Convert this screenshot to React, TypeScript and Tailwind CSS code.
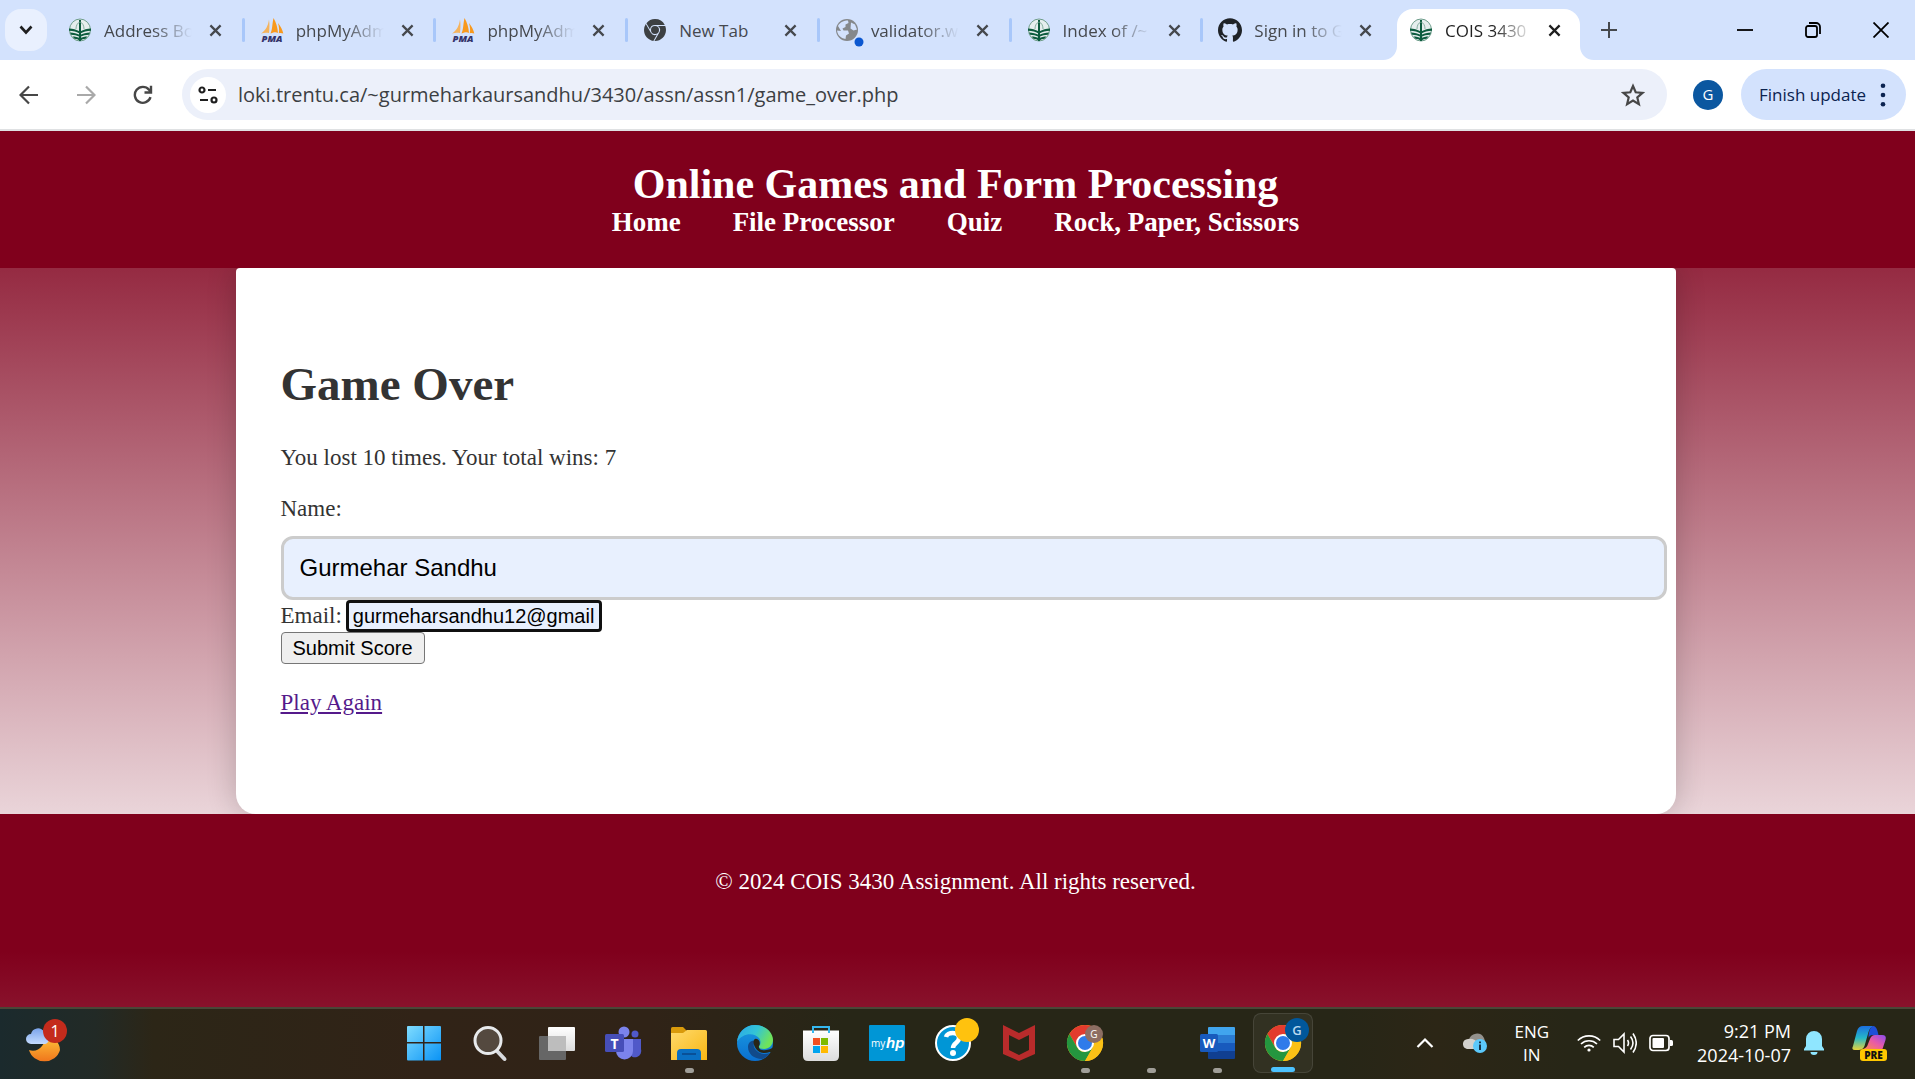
import React, { useId } from "react";
import { SiGithub, SiGooglechrome } from "react-icons/si";

const ui = "font-['Open_Sans','Noto_Sans',sans-serif]";

function TrentIcon() {
  return (
    <svg viewBox="0 0 24 24" className="size-6" fill="none">
      <ellipse cx="12" cy="12" rx="10.5" ry="11" stroke="#6f9e8c" strokeWidth="1" fill="#e6eeee" />
      <path d="M12 2v21" stroke="#0d5c3f" strokeWidth="2" />
      <path d="M12 4c-3 1-4 4-4 7M12 4c3 1 4 4 4 7" stroke="#6f9e8c" strokeWidth="0.8" />
      <path d="M1 10.5c4 0 7 1 11 3 4-2 7-3 11-3v2.2c-4 0-8 1.2-11 3-3-1.800-7-3-11-3z" fill="#0d5c3f" />
      <path d="M2 14.500c3.500 0 7 1 10 2.600 3-1.600 6.500-2.600 10-2.600l-1 2.200c-3 0-6 .8-9 2.300-3-1.500-6-2.300-9-2.300z" fill="#0d5c3f" />
      <path d="M4.500 18.500c2.500 0 5.500.6 7.500 1.700 2-1.100 5-1.700 7.500-1.700l-2 2.200c-2 .1-3.700.8-5.500 2.100-1.800-1.300-3.500-2-5.500-2.100z" fill="#0d5c3f" />
    </svg>
  );
}

function PmaIcon() {
  return (
    <svg viewBox="0 0 24 24" className="size-6">
      <path d="M9 1.500C8 8 6 12 1 15.500c3-1 5.500-1 8-.5C9.500 10 9.700 6 9 1.500z" fill="#f5b35c" />
      <path d="M13.500 0C12 7 12.500 11 10.500 15.500c4-1.500 5.500-1.500 7.500-.5C17.500 9 16 4 13.500 0z" fill="#f8991d" />
      <path d="M18 5c1 4 1.500 7 .8 10.300 1.700-.5 3-.3 4.500.2C22.500 12 20.500 8 18 5z" fill="#f8991d" />
      <text x="12" y="23.500" textAnchor="middle" fontFamily="Open Sans" fontWeight="800" fontStyle="italic" fontSize="9.500" fill="#33336a">PMA</text>
    </svg>
  );
}

function GlobeIcon() {
  return (
    <svg viewBox="0 0 24 24" className="size-6 overflow-visible">
      <circle cx="12" cy="12" r="11" fill="#85888b" />
      <path d="M3 8c2-4 6-5.500 10-5.500l.5 2.500-3 1.500v2.500l-3 1.500 1 2h4.500l1 3-3 2-.5 3.500c-5-1-8-4-8.500-8.500l4 .5zM16 4.500l4 2 2 5-3.500 1-3-2z" fill="#d3e2fd" />
      <circle cx="24" cy="24" r="4.500" fill="#0b57d0" />
    </svg>
  );
}

function Close({ dark }: { dark?: boolean }) {
  return (
    <svg viewBox="0 0 14 14" className="size-[13px]" stroke={dark ? "#1f1f1f" : "#45484d"} strokeWidth="2.4">
      <path d="M1.500 1.500l11 11M12.500 1.500l-11 11" />
    </svg>
  );
}

const tabs = [
  { icon: <TrentIcon />, title: "Address Bo" },
  { icon: <PmaIcon />, title: "phpMyAdm" },
  { icon: <PmaIcon />, title: "phpMyAdm" },
  { icon: <SiGooglechrome className="size-[22px] text-[#3c4043]" />, title: "New Tab" },
  { icon: <GlobeIcon />, title: "validator.w" },
  { icon: <TrentIcon />, title: "Index of /~" },
  { icon: <SiGithub className="size-6 text-[#1f2328]" />, title: "Sign in to G" },
];

const fade =
  "[mask-image:linear-gradient(to_right,black_55%,transparent_100%)]";

function TabStrip() {
  return (
    <div className="flex h-[60px] items-stretch bg-[#d3e2fd]">
      <div className="flex w-[55px] items-center pl-[5px]">
        <button aria-label="Search tabs" className="flex size-[42px] items-center justify-center rounded-2xl bg-[#e9f0fe]">
          <svg viewBox="0 0 14 10" className="h-[10px] w-[14px]" fill="none" stroke="#1f1f1f" strokeWidth="2.6">
            <path d="M1.500 1.500L7 7.500l5.500-6" />
          </svg>
        </button>
      </div>
      {tabs.map((t, i) => (
        <div key={i} className="flex min-w-0 flex-1 items-center pl-[13px]">
          <div className="mr-3 flex w-6 shrink-0 items-center justify-center">{t.icon}</div>
          <div className={"w-[88px] shrink-0 overflow-hidden pt-[2px] text-[17px] leading-6 whitespace-nowrap text-[#45484d] " + (t.title === "New Tab" ? "" : fade)}>{t.title}</div>
          <button aria-label="Close tab" className="ml-[17px] flex shrink-0 items-center">
            <Close />
          </button>
          <div className={"mr-[2px] ml-auto h-6 w-[3px] rounded-sm " + (i < 6 ? "bg-[#a8c7fa]" : "")} />
        </div>
      ))}
      <div className="relative mt-[9px] flex w-[183px] items-center rounded-t-2xl bg-white pb-[9px] pl-3">
        <svg viewBox="0 0 14 14" className="absolute bottom-0 -left-[14px] size-[14px]"><path d="M14 0v14H0C8 14 14 8 14 0z" fill="#fff" /></svg>
        <svg viewBox="0 0 14 14" className="absolute -right-[14px] bottom-0 size-[14px]"><path d="M0 0v14h14C6 14 0 8 0 0z" fill="#fff" /></svg>
        <div className="mr-3 flex w-6 shrink-0 items-center justify-center"><TrentIcon /></div>
        <div className={"w-[88px] shrink-0 overflow-hidden pt-[2px] text-[17px] leading-6 whitespace-nowrap text-[#1f1f1f] " + fade}>COIS 3430</div>
        <button aria-label="Close tab" className="ml-[15px] flex items-center"><Close dark /></button>
      </div>
      <div className="flex w-[335px] items-center justify-between pr-[26px] pl-[21px]">
        <button aria-label="New tab">
          <svg viewBox="0 0 16 16" className="size-4" stroke="#45484d" strokeWidth="2"><path d="M8 0v16M0 8h16" /></svg>
        </button>
        <div className="flex items-center gap-[52px]">
          <button aria-label="Minimize"><svg viewBox="0 0 16 16" className="size-4" stroke="#000" strokeWidth="1.8"><path d="M0 8h16" /></svg></button>
          <button aria-label="Restore">
            <svg viewBox="0 0 16 16" className="size-4" fill="none" stroke="#000" strokeWidth="1.8">
              <rect x="1" y="4" width="11" height="11" rx="2" />
              <path d="M4 1h7a4 4 0 014 4v7" />
            </svg>
          </button>
          <button aria-label="Close window"><svg viewBox="0 0 16 16" className="size-4" stroke="#000" strokeWidth="1.8"><path d="M.5.5l15 15M15.500.5l-15 15" /></svg></button>
        </div>
      </div>
    </div>
  );
}

function Toolbar() {
  return (
    <div className="flex h-[71px] items-center border-b-2 border-[#dfe1e3] bg-white pr-[9px] pl-[19px]">
      <div className="flex w-[163px] shrink-0 items-center gap-[37px]">
        <button aria-label="Back">
          <svg viewBox="0 0 20 20" className="size-5" fill="none" stroke="#474747" strokeWidth="2.2"><path d="M19 10H2M10 1.500L1.500 10l8.500 8.500" /></svg>
        </button>
        <button aria-label="Forward">
          <svg viewBox="0 0 20 20" className="size-5" fill="none" stroke="#a9a9a9" strokeWidth="2.2"><path d="M1 10h17M10 1.500l8.500 8.500-8.500 8.500" /></svg>
        </button>
        <button aria-label="Reload">
          <svg viewBox="0 0 20 20" className="size-5" fill="none" stroke="#474747" strokeWidth="2.4"><path d="M17.500 12.200A8 8 0 1116 4.700L18 7M18 .8V7.500h-6.500" /></svg>
        </button>
      </div>
      <div className="flex h-[51px] flex-1 items-center rounded-full bg-[#ecf0fa] pr-[22px] pl-2">
        <button aria-label="View site information" className="flex size-9 shrink-0 items-center justify-center rounded-full bg-white">
          <svg viewBox="0 0 20 18" className="h-[18px] w-5" fill="none" stroke="#1f1f1f" strokeWidth="2.2">
            <circle cx="4" cy="4" r="2.500" /><path d="M10 4h8M2 14h8" /><circle cx="16" cy="14" r="2.500" />
          </svg>
        </button>
        <input aria-label="Address" defaultValue="loki.trentu.ca/~gurmeharkaursandhu/3430/assn/assn1/game_over.php" className="ml-3 h-10 min-w-0 flex-1 bg-transparent text-[20px] text-[#3c3f43] outline-none" />
        <button aria-label="Bookmark this tab">
          <svg viewBox="0 0 24 24" className="size-6" fill="none" stroke="#474747" strokeWidth="2.2"><path d="M12 3l2.700 6.300 6.800.6-5.200 4.500 1.600 6.700L12 17.500l-5.900 3.600 1.600-6.700L2.500 9.900l6.800-.6z" /></svg>
        </button>
      </div>
      <button aria-label="Profile" className="ml-[26px] flex size-[30px] items-center justify-center rounded-full bg-[#0b57a0] text-[15px] text-white">G</button>
      <button className="ml-[18px] flex h-[51px] w-[165px] items-center justify-between rounded-full bg-[#d3e2fd] pr-5 pl-[18px] text-[17px] whitespace-nowrap text-[#0b2350]">
        Finish update
        <svg viewBox="0 0 6 26" className="h-6 w-[6px]" fill="#0b2350"><circle cx="3" cy="3" r="2.500" /><circle cx="3" cy="13" r="2.500" /><circle cx="3" cy="23" r="2.500" /></svg>
      </button>
    </div>
  );
}

function ChromeLogo() {
  return (
    <>
      <circle cx="18" cy="18" r="18" fill="#fbc116" />
      <path d="M18 9h15.600A18 18 0 002.400 9l7.800 13.500z" fill="#e33b2e" />
      <path d="M2.400 9a18 18 0 0015.600 27l7.800-13.500L18 27a9 9 0 01-7.800-4.500z" fill="#24963f" />
      <path d="M18 36l7.800-13.500A9 9 0 0018 9h15.600A18 18 0 0118 36z" fill="#fbc116" />
      <circle cx="18" cy="18" r="9" fill="#fff" />
      <circle cx="18" cy="18" r="7" fill="#2f7bea" />
    </>
  );
}

function Icon({ children }: { children: React.ReactNode }) {
  return <svg viewBox="0 0 36 36" className="size-9 overflow-visible">{children}</svg>;
}

function TaskButton({ label, mark, active, children }: { label: string; mark?: boolean; active?: boolean; children?: React.ReactNode }) {
  return (
    <button aria-label={label} className="flex h-full w-[66px] items-center justify-center">
      <span className={"relative flex h-[60px] w-[60px] items-center justify-center rounded-lg " + (active ? "border border-white/10 bg-white/5" : "")}>
        {children}
        {mark && <span className="absolute bottom-0 h-[5px] w-[9px] rounded-full bg-[#a09e98]" />}
        {active && <span className="absolute bottom-0 h-[5px] w-6 rounded-full bg-[#4cc2ff]" />}
      </span>
    </button>
  );
}

function Taskbar() {
  const id = useId().replace(/[^a-zA-Z0-9]/g, "");
  const g = (n: string) => "url(#" + id + n + ")";
  return (
    <footer className="flex h-[72px] items-center border-t-2 border-[#4a4637] bg-[linear-gradient(to_right,#1b2a2d_0%,#222a26_5%,#2c2617_8%,#312317_22%,#302317_34%,#272617_44%,#272617_70%,#2c2616_75%,#272617_82%)] pb-[2px] text-white">
      <svg width="0" height="0" className="absolute">
        <defs>
          <linearGradient id={id + "win"} x1="0" y1="0" x2="1" y2="1"><stop offset="0" stopColor="#7fdcff" /><stop offset="1" stopColor="#0a93f5" /></linearGradient>
          <linearGradient id={id + "moon"} x1="0" y1="0" x2="0" y2="1"><stop offset="0" stopColor="#ffc93c" /><stop offset="1" stopColor="#f0761c" /></linearGradient>
          <linearGradient id={id + "cloud"} x1="0" y1="0" x2="0" y2="1"><stop offset="0" stopColor="#7ba4ea" /><stop offset="1" stopColor="#c4dcff" /></linearGradient>
          <linearGradient id={id + "fold"} x1="0" y1="0" x2="1" y2="1"><stop offset="0" stopColor="#ffda6c" /><stop offset="1" stopColor="#f8b613" /></linearGradient>
          <linearGradient id={id + "edge"} x1="0" y1="0" x2="1" y2=".4"><stop offset="0" stopColor="#2aa6ea" /><stop offset=".55" stopColor="#33c4d6" /><stop offset="1" stopColor="#6fe35a" /></linearGradient>
          <linearGradient id={id + "edgeb"} x1="0" y1="0" x2="0" y2="1"><stop offset="0" stopColor="#1a9be0" /><stop offset="1" stopColor="#0a6fd0" /></linearGradient>
          <linearGradient id={id + "co1"} x1="0" y1="0" x2="0" y2="1"><stop offset="0" stopColor="#1b6fe0" /><stop offset=".5" stopColor="#25b8c8" /><stop offset="1" stopColor="#e8d33a" /></linearGradient>
          <linearGradient id={id + "co2"} x1="1" y1="0" x2="0" y2="1"><stop offset="0" stopColor="#8a4cf0" /><stop offset=".5" stopColor="#e85aa8" /><stop offset="1" stopColor="#ff8a4c" /></linearGradient>
          <linearGradient id={id + "paper"} x1="0" y1="0" x2="0" y2="1"><stop offset="0" stopColor="#fff" /><stop offset="1" stopColor="#dcdcdc" /></linearGradient>
        </defs>
      </svg>
      <div className="flex w-[392px] shrink-0 items-center pl-6">
        <button aria-label="Weather" className="flex">
          <svg viewBox="0 0 44 52" className="h-[52px] w-11">
            <path d="M5 33c5 2 10 0 13-4s4-7 3-11c8 1 15 7 15 15a16 15 0 01-31 0z" fill={g("moon")} />
            <path d="M7 27a5 5 0 010-10 7 7 0 0113-2 6 6 0 015 6c0 4-2 6-5 6z" fill={g("cloud")} />
            <circle cx="31" cy="14" r="12" fill="#c42b1c" />
            <text x="31" y="20" fontFamily="Open Sans" fontSize="16" textAnchor="middle" fill="#fff">1</text>
          </svg>
        </button>
      </div>
      <nav aria-label="Pinned apps" className="flex h-full shrink-0">
        <TaskButton label="Start"><Icon><g fill={g("win")}><path d="M0 2q0-1 1-1h15v16H0zM17.500 1H33q1 0 1 1v15H17.500zM0 18.500h16v17H1q-1 0-1-1zM17.500 18.500H34v16q0 1-1 1H17.500z" /></g></Icon></TaskButton>
        <TaskButton label="Search"><Icon><path d="M23 25l8.500 9" stroke="#d8dade" strokeWidth="4" strokeLinecap="round" /><circle cx="15" cy="15.500" r="13" fill="#54493f" stroke="#e8eaec" strokeWidth="3" /></Icon></TaskButton>
        <TaskButton label="Task view"><Icon><rect x="9" y="2" width="27" height="24" rx="1" fill={g("paper")} /><rect x="0" y="11" width="27" height="24" rx="1" fill="#666" /><path d="M9 11h18v15H9z" fill="#bdbdbd" /></Icon></TaskButton>
        <TaskButton label="Teams"><Icon><circle cx="19" cy="7" r="5.500" fill="#7b83eb" /><circle cx="30" cy="9" r="3.500" fill="#5059c9" /><path d="M24 14h12v10a6 6 0 01-12 4z" fill="#5059c9" /><path d="M11 14h17v12a8.500 8.500 0 01-17 0z" fill="#7b83eb" /><rect x="0" y="9" width="19" height="18" rx="1.500" fill="#464eb8" /><text x="9.500" y="23.500" textAnchor="middle" fontSize="14" fontWeight="700" fontFamily="Open Sans" fill="#fff">T</text></Icon></TaskButton>
        <TaskButton label="File Explorer" mark><Icon><path d="M0 3.500Q0 2 1.500 2H12l4 4-3 4H0z" fill="#d99a0b" /><path d="M0 8h12l4-3h18.500Q36 5 36 6.500V35H0z" fill={g("fold")} /><path d="M6 35v-7q0-4 4-4h16q4 0 4 4v7z" fill="#0a6fc2" /><path d="M11 29h14" stroke="#0a4a8c" strokeWidth="1.6" /></Icon></TaskButton>
        <TaskButton label="Edge"><Icon>
          <circle cx="18" cy="18" r="18" fill={g("edgeb")} />
          <path d="M11 22c0 7 6 12 14 12 3-1 6-3 8-6-5 2-10 1-13-2-4-3-4-7-2-10-4-1-7 2-7 6z" fill="#114a8b" />
          <path d="M0 17C1 7 9 0 18 0c10 0 18 7 18 15 0 5-4 9-9 9-3 0-6-1-5-3 2-2 2-5 0-8C17 7 5 8 0 17z" fill={g("edge")} />
          <path d="M18 14c4-1 6 4 4 7-1 3 3 5 7 4 2 0 5-1 9-4v6l-5 0c-6 2-10 1-13-2s-5-9-2-11z" fill="#292617" />
        </Icon></TaskButton>
        <TaskButton label="Microsoft Store"><Icon><path d="M0 5.500h36V31q0 5-5 5H5q-5 0-5-5z" fill={g("paper")} /><path d="M10 8V2h16v6" fill="none" stroke="#35b8f0" strokeWidth="2" /><path d="M10 13h7v7h-7z" fill="#f25022" /><path d="M18 13h7v7h-7z" fill="#7fba00" /><path d="M10 21h7v7h-7z" fill="#00a4ef" /><path d="M18 21h7v7h-7z" fill="#ffb900" /></Icon></TaskButton>
        <TaskButton label="myHP"><Icon><rect width="36" height="36" rx="1" fill="#0096d6" /><text x="2" y="22" fontSize="10" fontFamily="Open Sans" fill="#fff">my</text><text x="17" y="23" fontSize="15" fontWeight="700" fontStyle="italic" fontFamily="Liberation Sans Narrow, Liberation Sans" fill="#fff">hp</text></Icon></TaskButton>
        <TaskButton label="HP Support Assistant"><Icon><circle cx="18" cy="18" r="17" fill="#0096d6" stroke="#fff" strokeWidth="2" /><path d="M11 12c1-5 13-6 13 1 0 5-6 5-6 10" fill="none" stroke="#fff" strokeWidth="4.5" /><circle cx="18" cy="28" r="3" fill="#fff" /><circle cx="32" cy="5" r="12" fill="#ffc20e" /></Icon></TaskButton>
        <TaskButton label="McAfee"><Icon><path d="M2 0l16 8 16-8v29l-16 7-16-7zM8 10v15l10 5 10-5V10l-10 5z" fillRule="evenodd" fill="#b92b2b" /></Icon></TaskButton>
        <TaskButton label="Chrome" mark><Icon><ChromeLogo /><circle cx="27" cy="9" r="9" fill="#8d6e63" /><text x="27" y="13" textAnchor="middle" fontSize="10" fontFamily="Open Sans" fill="#fff">G</text></Icon></TaskButton>
        <TaskButton label="Running app" mark />
        <TaskButton label="Word" mark><Icon><path d="M9 10V3q0-1 1-1h25q1 0 1 1v7z" fill="#41a5ee" /><path d="M9 10h27v8H9z" fill="#2b7cd3" /><path d="M9 18h27v8H9z" fill="#185abd" /><path d="M9 26h27v7q0 1-1 1H10q-1 0-1-1z" fill="#103f91" /><rect x="1" y="9" width="18" height="18" rx="1.500" fill="#185abd" /><text x="10" y="23" textAnchor="middle" fontSize="13" fontWeight="700" fontFamily="Open Sans" fill="#fff">W</text></Icon></TaskButton>
        <TaskButton label="Chrome" active><Icon><ChromeLogo /><circle cx="32" cy="5" r="12" fill="#01579b" /><text x="32" y="10" textAnchor="middle" fontSize="13" fontWeight="600" fontFamily="Open Sans" fill="#b7d8ee">G</text></Icon></TaskButton>
      </nav>
      <div className="flex min-w-0 flex-1 items-center justify-end pr-7">
        <button aria-label="Show hidden icons"><svg viewBox="0 0 18 12" className="h-3 w-[18px]" fill="none" stroke="#fff" strokeWidth="2.2"><path d="M1.500 10L9 2.500l7.500 7.500" /></svg></button>
        <button aria-label="OneDrive" className="ml-7">
          <svg viewBox="0 0 26 22" className="h-[22px] w-[26px]"><path d="M7 8a8 8 0 0115-2l2 6-6 4z" fill="#94928d" /><path d="M5 17a5 5 0 01-1-9.500c5-2 10 0 12 4l-3 5.500z" fill="#d3d1cd" /><circle cx="18" cy="14" r="7" fill="#5bc8fb" /><path d="M18 12.500v5.500M18 9.500v1.800" stroke="#123" strokeWidth="1.8" /></svg>
        </button>
        <button className="ml-[26px] text-center text-[17px] leading-[23px]">ENG<br />IN</button>
        <button aria-label="Network, volume and battery" className="ml-7 flex items-center gap-3">
          <svg viewBox="0 0 24 20" className="h-5 w-6" fill="none" stroke="#fff" strokeWidth="1.7"><path d="M.8 7.500a16 16 0 0122.400 0M4 11a11.500 11.500 0 0116 0M7.200 14.300a7 7 0 019.600 0" /><circle cx="12" cy="17" r="1.600" fill="#fff" stroke="none" /></svg>
          <svg viewBox="0 0 24 22" className="h-[22px] w-6" fill="none" stroke="#fff" strokeWidth="1.6"><path d="M1 7.500h4.500L11 2v18l-5.500-5.500H1zM14.500 8q2 3 0 6M17.500 4.500q5 6.500 0 13M20 1.500q6.500 9.500 0 19" /></svg>
          <svg viewBox="0 0 24 18" className="h-[18px] w-6"><rect x="1" y="1.500" width="19" height="15" rx="3" fill="none" stroke="#fff" strokeWidth="1.7" /><rect x="3.500" y="4" width="11.500" height="10" rx="1" fill="#fff" /><path d="M21 6h1.500q1.500 0 1.500 1.500v3q0 1.500-1.500 1.500H21z" fill="#fff" /></svg>
        </button>
        <button className="ml-6 text-right text-[18px] leading-6 whitespace-nowrap">9:21 PM<br />2024-10-07</button>
        <button aria-label="Notifications" className="ml-[13px]">
          <svg viewBox="0 0 20 24" className="h-6 w-5" fill="#8fe6ff"><path d="M10 0a8 8 0 018 8v7l2 3v1.500H0V18l2-3V8a8 8 0 018-8zM6.500 21h7a3.500 3 0 01-7 0z" /></svg>
        </button>
        <button aria-label="Copilot preview" className="ml-[27px]">
          <svg viewBox="0 0 36 36" className="size-9">
            <path d="M2 21L6 6q1.500-5 6-5h11q-4 1-5.500 6l-4 14q-1.500 4-6 4H4q-4 0-2-4z" fill={g("co1")} />
            <path d="M22 1q3 0 4.500 5l1 4h-6q-3 0-4 3 0-10 4.500-12z" fill="#1f4fd8" />
            <path d="M24 10h7q5 0 3.500 5l-3 9H12q4-1 5-5l2-5q1.500-4 5-4z" fill={g("co2")} />
            <rect x="9" y="24" width="27" height="12" rx="3" fill="#ffc700" />
            <text x="22.500" y="34" textAnchor="middle" fontFamily="Open Sans" fontWeight="800" fontSize="10" fill="#111">PRE</text>
          </svg>
        </button>
      </div>
    </footer>
  );
}

const links = ["Home", "File Processor", "Quiz", "Rock, Paper, Scissors"];

export default function App() {
  return (
    <div className={"flex min-h-screen flex-col " + ui}>
      <TabStrip />
      <Toolbar />
      <div className="flex flex-1 flex-col bg-[linear-gradient(to_bottom,#80001c,#ffffff)] bg-[length:100%_820px] font-['Liberation_Serif',serif] text-[#333333]">
        <header className="flex flex-col items-center bg-[#80001c] pt-[31px] pr-1 pb-[30px] font-bold text-white">
          <h1 className="text-[42px] leading-[44px]">Online Games and Form Processing</h1>
          <nav className="flex gap-[52px] text-[27px] leading-8">
            {links.map((l) => (
              <a key={l} href="#">{l}</a>
            ))}
          </nav>
        </header>
        <div className="pr-1">
          <main className="mx-auto w-full max-w-[1440px] rounded-t-sm rounded-b-[20px] bg-white pt-[87px] pr-[9px] pb-[97px] pl-[45px] text-[23px] leading-7 shadow-[0_0_30px_rgba(0,0,0,0.2)] [clip-path:inset(0_-40px)]">
            <h2 className="text-[47px] leading-[58px] font-bold">Game Over</h2>
            <p className="mt-[31px]">You lost 10 times. Your total wins: 7</p>
            <form className="mt-[23px]" onSubmit={(e) => e.preventDefault()}>
              <label htmlFor="name" className="block">Name:</label>
              <input id="name" defaultValue="Gurmehar Sandhu" className="mt-[13px] block h-16 w-full rounded-xl border-3 border-[#cccccc] bg-[#e8f0fe] px-4 font-['Liberation_Sans',sans-serif] text-[24px] text-black outline-none" />
              <div className="flex items-center">
                <label htmlFor="email">Email:</label>
                <input id="email" defaultValue="gurmeharsandhu12@gmail" className="ml-1 h-8 w-[256px] rounded-sm border-3 border-[#101010] bg-[#e8f0fe] px-1 font-['Liberation_Sans',sans-serif] text-[20px] text-black outline-none" />
              </div>
              <button className="block h-8 rounded-sm border border-[#767676] bg-[#efefef] px-[11px] font-['Liberation_Sans',sans-serif] text-[20px] leading-7 text-black">Submit Score</button>
            </form>
            <a href="#" className="mt-[25px] block w-fit text-[#551a8b] underline">Play Again</a>
          </main>
        </div>
        <footer className="bg-[#80001c] pt-[54px] pr-1 pb-14 text-center text-[23px] leading-7 text-white">© 2024 COIS 3430 Assignment. All rights reserved.</footer>
      </div>
      <Taskbar />
    </div>
  );
}
